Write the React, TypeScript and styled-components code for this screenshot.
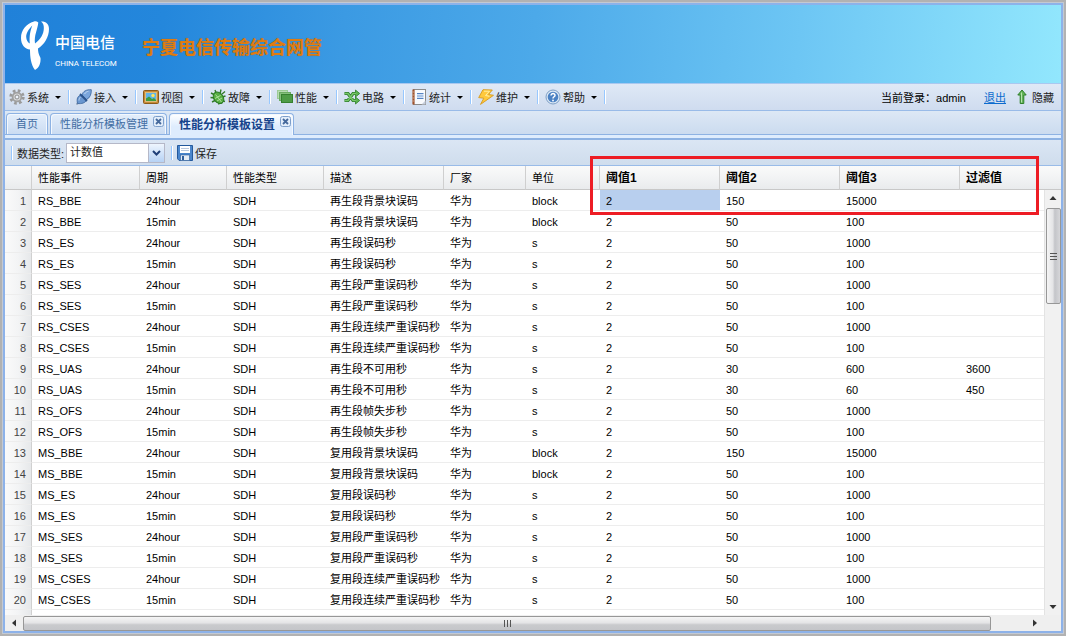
import React from "react";
import styled, { createGlobalStyle } from "styled-components";

const Global = createGlobalStyle`
  *, *::before, *::after { box-sizing: border-box; }
  html, body { margin: 0; }
  body, button, select, input, table {
    font-family: "Liberation Sans", "Noto Sans CJK SC", sans-serif;
    font-size: 11px;
    color: #222;
  }
`;

const Frame = styled.div`
  height: 100vh;
  min-height: 300px;
  padding: 1px;
  border: 2px solid #b2b2b2;
  background: #c3c9d2;
`;

const Shell = styled.div`
  height: 100%;
  display: flex;
  flex-direction: column;
  border: 2px solid #8db2e9;
  background: #fff;
`;

const Banner = styled.header`
  flex: none;
  height: 78px;
  display: flex;
  align-items: center;
  padding-left: 16px;
  background: linear-gradient(95deg, #2081d9 0%, #2487dc 15%, #3b9ae3 32%, #4ca9e9 50%, #6dc6f4 75%, #92e7fd 100%);
`;

const Brand = styled.div`
  display: flex;
  align-items: center;
  gap: 6px;
  width: 121px;
  padding-top: 4px;
  color: #fff;
`;

const BrandText = styled.div`
  display: flex;
  flex-direction: column;
  gap: 4px;
  padding-top: 8px;
  white-space: nowrap;
`;

const BrandName = styled.span`
  font: 500 15px/24px "Noto Sans CJK SC", sans-serif;
`;

const BrandLatin = styled.span`
  font: 8px/12px Roboto, sans-serif;
`;

const Title = styled.h1`
  margin: 0;
  padding-top: 4px;
  font: bold 18px/34px "Noto Sans CJK SC", sans-serif;
  color: #e07c10;
  text-shadow: 0 0 1px #7a5a2c;
  white-space: nowrap;
`;

const Menu = styled.nav`
  flex: none;
  height: 28px;
  display: flex;
  align-items: center;
  justify-content: space-between;
  padding-right: 7px;
  border-top: 1px solid #a9c8f0;
  border-bottom: 1px solid #99bbe8;
  background: linear-gradient(#dfe9f6, #cfdcef);
`;

const MenuGroup = styled.div`
  display: flex;
  align-items: center;
`;

const MenuButton = styled.button`
  display: flex;
  align-items: center;
  gap: 2px;
  padding: 0 7px 0 6px;
  height: 22px;
  border: 0;
  background: none;
  white-space: nowrap;
  &:first-child { padding-left: 4px; }
`;

const Caret = styled.i`
  margin-left: 4px;
  border: 3px solid transparent;
  border-top-color: #000;
  border-bottom: 0;
`;

const Separator = styled.span`
  flex: none;
  width: 2px;
  height: 14px;
  border-left: 1px solid #98c8ff;
  border-right: 1px solid #fff;
`;

const Account = styled.div`
  display: flex;
  align-items: center;
  color: #000;
  white-space: nowrap;
`;

const Logout = styled.a`
  margin: 0 8px 0 18px;
  color: #0b6bce;
`;

const HideButton = styled.button`
  display: flex;
  align-items: center;
  gap: 2px;
  padding: 0;
  border: 0;
  background: none;
`;

const TabStrip = styled.div`
  flex: none;
  height: 24px;
  display: flex;
  align-items: flex-end;
  gap: 2px;
  padding: 0 1px;
  border-bottom: 1px solid #8db2e3;
  background: linear-gradient(#dde8f5, #cbdbef);
`;

const Tab = styled.div<{ $active?: boolean }>`
  display: flex;
  align-items: flex-start;
  height: ${(p) => (p.$active ? 22 : 21)}px;
  margin-bottom: ${(p) => (p.$active ? -1 : 0)}px;
  border: 1px solid #8db2e3;
  border-bottom: 0;
  border-radius: 4px 4px 0 0;
  box-shadow: inset 1px 1px #f3f8fe, inset -1px 0 #f3f8fe;
  background: ${(p) => (p.$active ? "linear-gradient(#fff, #deecfd 60%)" : "linear-gradient(#e3eefb, #cbdcf2)")};
`;

const TabLabel = styled.button<{ $active?: boolean }>`
  padding: 0 9px;
  height: 18px;
  border: 0;
  background: none;
  white-space: nowrap;
  color: ${(p) => (p.$active ? "#15428b" : "#416da3")};
  font-size: ${(p) => (p.$active ? 12 : 11)}px;
  font-weight: ${(p) => (p.$active ? "bold" : "normal")};
`;

const TabClose = styled.button`
  display: flex;
  margin: 2px 2px 0 -4px;
  padding: 0;
  border: 0;
  background: none;
`;

const TabGap = styled.div`
  flex: none;
  height: 3px;
  background: #deecfd;
`;

const Panel = styled.main`
  flex: 1;
  min-height: 0;
  position: relative;
  display: flex;
  flex-direction: column;
  border-top: 2px solid #8db2e3;
`;

const Toolbar = styled.div`
  flex: none;
  height: 26px;
  display: flex;
  align-items: center;
  padding: 0 6px;
  border-bottom: 1px solid #99bbe8;
  background: linear-gradient(#dbe6f4, #cfdded);
`;

const FieldLabel = styled.label`
  margin: 0 2px 0 4px;
  white-space: nowrap;
`;

const Combo = styled.div`
  position: relative;
  margin-right: 6px;
`;

const ComboSelect = styled.select`
  display: block;
  appearance: none;
  width: 99px;
  height: 20px;
  padding: 0 17px 2px 3px;
  border: 1px solid #b5b8c8;
  border-radius: 0;
  background: #fff;
`;

const ComboTrigger = styled.span`
  position: absolute;
  top: 1px;
  right: 1px;
  width: 16px;
  height: 18px;
  display: grid;
  place-items: center;
  pointer-events: none;
  border-left: 1px solid #b5b8c8;
  background: linear-gradient(#eef5fe, #b6d2f5);
`;

const SaveButton = styled.button`
  display: flex;
  align-items: center;
  gap: 2px;
  margin-left: 4px;
  padding: 0;
  border: 0;
  background: none;
`;

const GridView = styled.div`
  flex: 1;
  min-height: 0;
  position: relative;
  overflow: hidden;
`;

const Table = styled.table`
  width: 100%;
  table-layout: fixed;
  border-collapse: separate;
  border-spacing: 0;
  color: #000;
`;

const HeadCell = styled.th<{ $strong?: boolean }>`
  height: 24px;
  padding: 1px 6px 0;
  text-align: left;
  line-height: 16px;
  white-space: nowrap;
  font-size: ${(p) => (p.$strong ? 12 : 11)}px;
  font-weight: ${(p) => (p.$strong ? "bold" : "normal")};
  border-bottom: 1px solid #c8c8c8;
  border-right: 1px solid #cfcfcf;
  background: linear-gradient(#fafafa, #f3f4f5 45%, #e9ebed);
  &:last-child { border-right: 0; }
`;

const Cell = styled.td<{ $selected?: boolean }>`
  height: 21px;
  padding: 2px 6px 0;
  line-height: 16px;
  white-space: nowrap;
  overflow: hidden;
  border-bottom: 1px solid #ededed;
  ${(p) => p.$selected && "background: #b8cfee;"}
`;

const NumberCell = styled(Cell)`
  text-align: right;
  padding: 2px 5px 0 0;
  color: #444;
  border-right: 1px solid #d0d0d0;
  background: linear-gradient(90deg, #fafafa, #f3f4f5 50%, #e6e8ea);
`;

const VScroll = styled.div`
  position: absolute;
  top: 24px;
  right: 0;
  bottom: 0;
  width: 17px;
  display: flex;
  flex-direction: column;
  justify-content: space-between;
  align-items: center;
  background: #f1f1f1;
  border-left: 1px solid #e3e3e3;
`;

const HScroll = styled.div`
  flex: none;
  height: 16px;
  display: flex;
  align-items: center;
  padding-right: 17px;
  background: #efefef;
`;

const ScrollArrow = styled.button`
  flex: none;
  display: grid;
  place-items: center;
  width: 18px;
  height: 16px;
  padding: 0;
  border: 0;
  background: none;
`;

const Thumb = styled.div<{ $vertical?: boolean }>`
  display: grid;
  place-items: center;
  border: 1px solid #979797;
  border-radius: 2px;
  ${(p) =>
    p.$vertical
      ? "width: 15px; height: 96px; margin-top: 2px; background: linear-gradient(90deg, #f5f5f5, #e4e4e6 45%, #c4c5c9 60%, #d6d6d9);"
      : "flex: 1; height: 15px; margin-right: 35px; background: linear-gradient(#f5f5f5, #e4e4e6 45%, #c9cacd 60%, #c4c5c9);"}
`;

const Spacer = styled.span`
  flex: 1;
`;

const Highlight = styled.div`
  position: absolute;
  z-index: 2;
  top: 16px;
  left: 585px;
  right: 22px;
  height: 59px;
  border: 3px solid #ed1c24;
  pointer-events: none;
`;

const Svg = ({ children, size = 16 }: { children: React.ReactNode; size?: number }) => (
  <svg width={size} height={size} viewBox="0 0 16 16" aria-hidden="true">
    {children}
  </svg>
);

const icons: Record<string, React.ReactNode> = {
  gear: (
    <Svg>
      <circle cx="8" cy="8" r="6.2" fill="none" stroke="#9a9a9a" strokeWidth="3" strokeDasharray="2.6 2.27" />
      <circle cx="8" cy="8" r="4.4" fill="#d8d8d8" stroke="#a0a0a0" strokeWidth="1.8" />
      <circle cx="8" cy="8" r="2" fill="#eef3fa" stroke="#8d8d8d" />
    </Svg>
  ),
  plug: (
    <Svg>
      <path d="M0.500 15.500L4 12" stroke="#8a99ad" strokeWidth="1.600" />
      <path d="M1.500 14.500C0.500 10 1.500 6.500 5.500 6l5 5c-1 3-5 4-9 3.500z" fill="#6a97d0" stroke="#37629b" strokeWidth=".8" />
      <path d="M6 6C7 2 10.500 0.500 15.300 0.700 15.500 5 14 9 10.500 10.500z" fill="#7ba6dc" stroke="#37629b" strokeWidth=".8" />
      <path d="M4 5l7 7" stroke="#2c548c" strokeWidth="1.800" />
      <path d="M8.500 5c1-1.500 2.500-2.500 4-2.800M3 11.500c0-1.500.5-2.500 1.500-3.500" fill="none" stroke="#c5daf3" />
    </Svg>
  ),
  picture: (
    <Svg>
      <rect x=".5" y="1.500" width="15" height="13" rx="1" fill="#c78a35" stroke="#8c5a1b" />
      <rect x="2.500" y="3.500" width="11" height="9" fill="#5fb4e8" stroke="#e9c27b" strokeWidth=".8" />
      <path d="M3 12V9.500l3-2 3 2.500 2-1 2 2v1z" fill="#3e9b3e" />
      <circle cx="10" cy="6.500" r="1.700" fill="#ffe45a" />
    </Svg>
  ),
  bug: (
    <Svg>
      <path d="M1 4l4 2M5 1l1.500 4M11 0.500L10 5M0.500 8.500L5 9M2 13l4-2M15.500 7L12 8M15 12.500l-3.500-1M9 15.500L8.500 13M15 2.500L12 5" stroke="#347a2b" strokeWidth="1.400" />
      <ellipse cx="8.500" cy="8.800" rx="4.600" ry="6.300" transform="rotate(-38 8.500 8.800)" fill="#57ad43" stroke="#2c7a24" />
      <path d="M5.500 5.500l6 7.500M5 9.500l5.500-3M7 12l5-3" stroke="#b5e6a3" strokeWidth=".9" />
    </Svg>
  ),
  layers: (
    <Svg>
      <rect x=".5" y="1.500" width="10" height="8" fill="#b8dcb2" stroke="#9ccb96" />
      <rect x="2.500" y="3.500" width="11" height="8" fill="#85bf7c" stroke="#6cab63" />
      <rect x="4.500" y="5.500" width="11" height="8" fill="#4e9b46" stroke="#35802f" />
    </Svg>
  ),
  shuffle: (
    <Svg>
      <path d="M0.500 4.500H4L9 11.500h3M0.500 11.500H4L9 4.500h3" fill="none" stroke="#2d7d2a" strokeWidth="3.200" />
      <path d="M11.500 1l4.200 3.500-4.200 3.500zM11.500 8l4.200 3.500-4.200 3.500z" fill="#5db350" stroke="#2d7d2a" strokeWidth=".8" />
      <path d="M0.800 4.500H4L9 11.500h3M0.800 11.500H4L9 4.500h3" fill="none" stroke="#79c76b" strokeWidth="1.400" />
    </Svg>
  ),
  notebook: (
    <Svg>
      <rect x="2.500" y=".5" width="12" height="15" fill="#f8fafd" stroke="#8b8b8b" />
      <path d="M2.500 .5v15" stroke="#a0532c" strokeWidth="2.200" />
      <path d="M1 3h3M1 6h3M1 9h3M1 12h3" stroke="#c8a08a" />
      <path d="M6 4.500h6.500M6 9.500h6.500" stroke="#5683c2" strokeWidth="1.200" />
      <path d="M6 7h6.500" stroke="#a9c4e8" strokeWidth="3" />
      <path d="M14.500 11.500v4h-4z" fill="#c6cedb" />
    </Svg>
  ),
  bolt: (
    <Svg>
      <path d="M5 .7L14.300 1 10.500 5.500l5 .8L2.500 15.400l3.300-6.200L.7 8.600z" fill="#ffc93c" stroke="#d9a02a" />
      <path d="M6 2.200h5.500L7.500 6.500l4 .8" fill="none" stroke="#fff0a5" />
    </Svg>
  ),
  help: (
    <Svg>
      <circle cx="8" cy="8" r="7" fill="#dce8f5" stroke="#7d9fc6" />
      <circle cx="8" cy="8" r="5.300" fill="#4c82c4" />
      <path d="M6 6.500C6 3.900 10.200 4 10 6.500 9.900 7.800 8 7.800 8 9.400" fill="none" stroke="#fff" strokeWidth="1.500" />
      <circle cx="8" cy="11.500" r=".9" fill="#fff" />
    </Svg>
  ),
  up: (
    <Svg>
      <path d="M8 1l4.200 5H9.800v8.500H6.200V6H3.800z" fill="#63b357" stroke="#2f8029" />
      <path d="M7.500 3.500v10" stroke="#b7e3ae" />
    </Svg>
  ),
  save: (
    <Svg>
      <path d="M.5.500h15v15H2.200L.5 13.800z" fill="#4a86cc" stroke="#24599c" />
      <rect x="3" y="1" width="10" height="7" fill="#fff" />
      <path d="M4 3.500h8M4 5.500h8" stroke="#b8c7dc" />
      <rect x="3.500" y="10" width="9" height="5.500" fill="#e5ecf5" stroke="#2f5f9c" strokeWidth=".6" />
      <rect x="5" y="11" width="2" height="4" fill="#315f9b" />
    </Svg>
  ),
};

const CloseGlyph = () => (
  <svg width="11" height="11" viewBox="0 0 11 11" aria-hidden="true">
    <rect x=".5" y=".5" width="10" height="10" rx="2" fill="#e3eefb" stroke="#7d9fcb" />
    <path d="M3 3l5 5M8 3l-5 5" stroke="#45699c" strokeWidth="1.800" />
  </svg>
);

const Logo = () => (
  <svg width="28" height="50" viewBox="0 0 28 50" aria-hidden="true">
    <path
      fillRule="evenodd"
      d="M13 .5C5 3 0 9 0 17c0 7 4 11 9 11.500C9 36 10 44 14 49c4-2 6-7 5.500-12-2-4-2.500-6.500-2.500-9.500C23 24 28 16 28 8 28 3 25 .3 20 .5c2.500 2 3 4 2.800 7.500C22.500 13 20 18 14 22.500 13 14 16.500 9 17.300 1.500 16 .3 14.500 0 13 .5zM11.300 4.500C8 8 5 12 5.200 16c.2 3 1.500 5.500 3.600 6.500C8 15 9.500 9 11.300 4.500z"
      fill="#fff"
    />
  </svg>
);

const Triangle = ({ d }: { d: string }) => (
  <svg width="8" height="8" viewBox="0 0 8 8" aria-hidden="true">
    <path d={d} fill="#333" />
  </svg>
);

const Grip = ({ vertical }: { vertical?: boolean }) => (
  <svg width="9" height="9" viewBox="0 0 9 9" aria-hidden="true">
    <path d={vertical ? "M1 1.500h7M1 4.500h7M1 7.500h7" : "M1.500 1v7M4.500 1v7M7.500 1v7"} stroke="#555" />
  </svg>
);

const menuItems = [
  ["gear", "系统"],
  ["plug", "接入"],
  ["picture", "视图"],
  ["bug", "故障"],
  ["layers", "性能"],
  ["shuffle", "电路"],
  ["notebook", "统计"],
  ["bolt", "维护"],
  ["help", "帮助"],
];

const columns = [
  { label: "", width: 27 },
  { label: "性能事件", width: 108 },
  { label: "周期", width: 87 },
  { label: "性能类型", width: 97 },
  { label: "描述", width: 120 },
  { label: "厂家", width: 82 },
  { label: "单位", width: 74 },
  { label: "阈值1", width: 120, strong: true },
  { label: "阈值2", width: 120, strong: true },
  { label: "阈值3", width: 120, strong: true },
  { label: "过滤值", strong: true },
];

type Counter = { code: string; desc: string; unit: string; day: string[]; quarter: string[] };

const common = { unit: "s", day: ["2", "50", "1000", ""], quarter: ["2", "50", "100", ""] };
const block = { unit: "block", day: ["2", "150", "15000", ""], quarter: ["2", "50", "100", ""] };

const counters: Counter[] = [
  { code: "RS_BBE", desc: "再生段背景块误码", ...block },
  { code: "RS_ES", desc: "再生段误码秒", ...common },
  { code: "RS_SES", desc: "再生段严重误码秒", ...common },
  { code: "RS_CSES", desc: "再生段连续严重误码秒", ...common },
  { code: "RS_UAS", desc: "再生段不可用秒", unit: "s", day: ["2", "30", "600", "3600"], quarter: ["2", "30", "60", "450"] },
  { code: "RS_OFS", desc: "再生段帧失步秒", ...common },
  { code: "MS_BBE", desc: "复用段背景块误码", ...block },
  { code: "MS_ES", desc: "复用段误码秒", ...common },
  { code: "MS_SES", desc: "复用段严重误码秒", ...common },
  { code: "MS_CSES", desc: "复用段连续严重误码秒", ...common },
];

const rows = counters.flatMap((c) => [
  [c.code, "24hour", "SDH", c.desc, "华为", c.unit, ...c.day],
  [c.code, "15min", "SDH", c.desc, "华为", c.unit, ...c.quarter],
]);

export default function App() {
  return (
    <>
      <Global />
      <Frame>
        <Shell>
          <Banner>
            <Brand>
              <Logo />
              <BrandText>
                <BrandName>中国电信</BrandName>
                <BrandLatin>CHINA TELECOM</BrandLatin>
              </BrandText>
            </Brand>
            <Title>宁夏电信传输综合网管</Title>
          </Banner>

          <Menu>
            <MenuGroup>
              {menuItems.map(([icon, label]) => (
                <React.Fragment key={label}>
                  <MenuButton>
                    {icons[icon]}
                    {label}
                    <Caret />
                  </MenuButton>
                  <Separator />
                </React.Fragment>
              ))}
            </MenuGroup>
            <Account>
              <span>当前登录：admin</span>
              <Logout href="#logout">退出</Logout>
              <HideButton>
                {icons.up}
                隐藏
              </HideButton>
            </Account>
          </Menu>

          <TabStrip>
            <Tab>
              <TabLabel>首页</TabLabel>
            </Tab>
            <Tab>
              <TabLabel>性能分析模板管理</TabLabel>
              <TabClose aria-label="关闭">
                <CloseGlyph />
              </TabClose>
            </Tab>
            <Tab $active>
              <TabLabel $active>性能分析模板设置</TabLabel>
              <TabClose aria-label="关闭">
                <CloseGlyph />
              </TabClose>
            </Tab>
          </TabStrip>
          <TabGap />

          <Panel>
            <Toolbar>
              <Separator />
              <FieldLabel htmlFor="dataType">数据类型:</FieldLabel>
              <Combo>
                <ComboSelect id="dataType" defaultValue="count">
                  <option value="count">计数值</option>
                </ComboSelect>
                <ComboTrigger>
                  <svg width="9" height="6" viewBox="0 0 9 6" aria-hidden="true">
                    <path d="M1 1l3.500 3.500L8 1" fill="none" stroke="#1f3f78" strokeWidth="2" />
                  </svg>
                </ComboTrigger>
              </Combo>
              <Separator />
              <SaveButton>
                {icons.save}
                保存
              </SaveButton>
            </Toolbar>

            <GridView>
              <Table>
                <colgroup>
                  {columns.map((c, i) => (
                    <col key={i} width={c.width} />
                  ))}
                </colgroup>
                <thead>
                  <tr>
                    {columns.map((c, i) => (
                      <HeadCell key={i} $strong={c.strong}>
                        {c.label}
                      </HeadCell>
                    ))}
                  </tr>
                </thead>
                <tbody>
                  {rows.map((row, r) => (
                    <tr key={r}>
                      <NumberCell>{r + 1}</NumberCell>
                      {row.map((value, c) => (
                        <Cell key={c} $selected={r === 0 && c === 6}>
                          {value}
                        </Cell>
                      ))}
                    </tr>
                  ))}
                  <tr>
                    <NumberCell />
                    <Cell colSpan={10} />
                  </tr>
                </tbody>
              </Table>
              <VScroll>
                <ScrollArrow aria-label="向上滚动">
                  <Triangle d="M0.500 6L4 2l3.500 4z" />
                </ScrollArrow>
                <Thumb $vertical>
                  <Grip vertical />
                </Thumb>
                <Spacer />
                <ScrollArrow aria-label="向下滚动">
                  <Triangle d="M0.500 2L4 6l3.500-4z" />
                </ScrollArrow>
              </VScroll>
            </GridView>
            <HScroll>
              <ScrollArrow aria-label="向左滚动">
                <Triangle d="M6 0.500L2 4l4 3.500z" />
              </ScrollArrow>
              <Thumb>
                <Grip />
              </Thumb>
              <ScrollArrow aria-label="向右滚动">
                <Triangle d="M2 0.500L6 4 2 7.500z" />
              </ScrollArrow>
            </HScroll>
            <Highlight />
          </Panel>
        </Shell>
      </Frame>
    </>
  );
}
